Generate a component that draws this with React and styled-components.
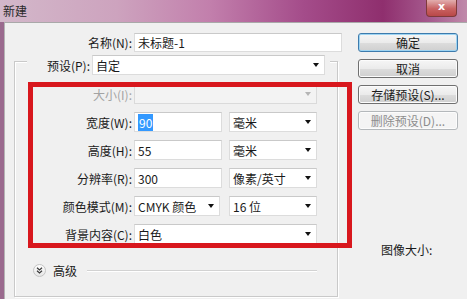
import React from "react";
import styled, { createGlobalStyle } from "styled-components";

const GlobalStyle = createGlobalStyle`
  html, body {
    margin: 0;
    padding: 0;
    background: #f0f0f0;
  }
  body {
    font-family: "Noto Sans CJK SC", "Liberation Sans", sans-serif;
    font-size: 12px;
    color: #1a1a1a;
  }
`;

const Window = styled.div`
  position: relative;
  width: 467px;
  height: 299px;
  overflow: hidden;
  display: flex;
  flex-direction: column;
  background: #f0f0f0;
`;

const TitleBar = styled.div`
  height: 22px;
  flex-shrink: 0;
  display: flex;
  justify-content: space-between;
  align-items: flex-start;
  padding-left: 3px;
  background: linear-gradient(
    to right,
    #d3b8ca 0%,
    #cda3be 25%,
    #c27fac 45%,
    #a44c8a 65%,
    #8f2f6e 82%,
    #a65a8e 92%,
    #c08aaa 100%
  );
`;

const Title = styled.span`
  font-size: 12px;
  line-height: 22px;
  color: #2a2a2a;
`;

const CloseButton = styled.div`
  width: 29px;
  height: 16px;
  margin-right: 10px;
  border: 1px solid #7e3a3a;
  border-top: none;
  border-radius: 0 0 4px 4px;
  background: linear-gradient(#e2aeae, #c96262 55%, #b94848);
  color: #fff;
  font-size: 11px;
  font-weight: bold;
  line-height: 13px;
  text-align: center;
  font-family: "DejaVu Sans", sans-serif;
`;

const Frame = styled.div`
  flex: 1;
  display: flex;
  border-left: 4px solid #9a6a8e;
`;

const Body = styled.div`
  flex: 1;
  display: flex;
  padding-top: 10px;
  background: #f0f0f0;
  border-left: 1px solid #b4b4b4;
  border-top: 1px solid #a9a9a9;
`;

const LeftColumn = styled.div`
  width: 345px;
  display: flex;
  flex-direction: column;
`;

const NameRow = styled.div`
  display: flex;
  align-items: center;
  height: 19px;
`;

const Label = styled.span`
  width: ${(p) => p.$w}px;
  margin-right: 2px;
  text-align: right;
  white-space: nowrap;
  color: ${(p) => (p.$disabled ? "#a3a3a3" : "#1a1a1a")};
`;

const Field = styled.div`
  box-sizing: border-box;
  width: ${(p) => p.$w}px;
  height: ${(p) => p.$h || 20}px;
  margin-right: ${(p) => p.$gap || 0}px;
  display: flex;
  align-items: center;
  justify-content: space-between;
  padding: 0 5px 0 3px;
  background: ${(p) => (p.$disabled ? "#f3f3f3" : "#fff")};
  border: 1px solid ${(p) => (p.$disabled ? "#dadada" : "#dcdcdc")};
  border-top-color: ${(p) => (p.$disabled ? "#d0d0d0" : "#c9c9c9")};
  white-space: nowrap;
`;

const Selected = styled.span`
  background: #3399ff;
  color: #fff;
  padding: 0 1px;
  line-height: 15px;
`;

const Arrow = styled.span`
  width: 0;
  height: 0;
  border-left: 3.5px solid transparent;
  border-right: 3.5px solid transparent;
  border-top: 4px solid ${(p) => (p.$disabled ? "#b5b5b5" : "#111")};
`;

const GroupBox = styled.div`
  box-sizing: border-box;
  width: 324px;
  height: 236px;
  margin: 9px 0 0 9px;
  border: 1px solid #c9c9c9;
  box-shadow: inset 1px 1px 0 #fff, 1px 1px 0 #fff;
  display: flex;
  flex-direction: column;
`;

const GroupHeader = styled.div`
  display: flex;
  align-items: center;
  margin-top: -7px;
  padding-left: 12px;
`;

const Legend = styled.span`
  display: flex;
  align-items: center;
  background: #f0f0f0;
  padding: 0 5px 0 17px;
  white-space: nowrap;
`;

const Rows = styled.div`
  display: flex;
  flex-direction: column;
  gap: 8px;
  margin-top: 9px;
`;

const Row = styled.div`
  display: flex;
  align-items: center;
`;

const AdvancedRow = styled.div`
  display: flex;
  align-items: center;
  gap: 7px;
  margin-top: 18px;
  padding-left: 18px;
`;

const RoundButton = styled.span`
  box-sizing: border-box;
  width: 13px;
  height: 13px;
  border-radius: 50%;
  border: 1px solid #c4c4c4;
  background: linear-gradient(#fdfdfd, #e6e6e6);
  display: flex;
  align-items: center;
  justify-content: center;
`;

const Divider = styled.span`
  width: 230px;
  height: 1px;
  margin-left: 3px;
  background: #d2d2d2;
  box-shadow: 0 1px 0 #fff;
`;

const RightColumn = styled.div`
  display: flex;
  flex-direction: column;
  gap: 7px;
  margin-left: 8px;
`;

const Button = styled.div`
  box-sizing: border-box;
  width: 100px;
  height: 19px;
  border-radius: 3px;
  border: 1px solid
    ${(p) => (p.$primary ? "#3d7bad" : p.$disabled ? "#b4b8bb" : "#707070")};
  background: ${(p) =>
    p.$disabled
      ? "#f4f4f4"
      : "linear-gradient(#f6f6f6 0%, #ebebeb 50%, #dddddd 51%, #cfcfcf 100%)"};
  box-shadow: ${(p) => (p.$primary ? "inset 0 0 0 1px #9ed4f2" : "inset 0 0 0 1px #fcfcfc")};
  color: ${(p) => (p.$disabled ? "#8d8d8d" : "#1a1a1a")};
  text-align: center;
  line-height: 17px;
  white-space: nowrap;
`;

const ImageSize = styled.span`
  margin: 106px 0 0 23px;
  line-height: 14px;
`;

const RedFrame = styled.div`
  position: absolute;
  left: 28px;
  top: 82px;
  width: 324px;
  height: 166px;
  box-sizing: border-box;
  border: 5px solid #d8171d;
  pointer-events: none;
`;

const ChevronDown = () => (
  <svg width="7" height="7" viewBox="0 0 7 7">
    <path d="M1 0.8 L3.5 3 L6 0.8 M1 3.8 L3.5 6 L6 3.8" fill="none" stroke="#3a3a3a" strokeWidth="1.2" />
  </svg>
);

const Select = ({ w, gap, disabled, children }) => (
  <Field $w={w} $gap={gap} $disabled={disabled}>
    <span>{children}</span>
    <Arrow $disabled={disabled} />
  </Field>
);

const rows = [
  { label: "大小(I):", disabled: true, fields: [{ select: true, w: 183, text: "" }] },
  {
    label: "宽度(W):",
    fields: [
      { w: 88, text: <Selected>90</Selected>, gap: 7 },
      { select: true, w: 88, text: "毫米" },
    ],
  },
  {
    label: "高度(H):",
    fields: [
      { w: 88, text: "55", gap: 7 },
      { select: true, w: 88, text: "毫米" },
    ],
  },
  {
    label: "分辨率(R):",
    fields: [
      { w: 88, text: "300", gap: 7 },
      { select: true, w: 88, text: "像素/英寸" },
    ],
  },
  {
    label: "颜色模式(M):",
    fields: [
      { select: true, w: 86, text: "CMYK 颜色", gap: 9 },
      { select: true, w: 88, text: "16 位" },
    ],
  },
  { label: "背景内容(C):", fields: [{ select: true, w: 183, text: "白色" }] },
];

export default function App() {
  return (
    <>
      <GlobalStyle />
      <Window>
        <TitleBar>
          <Title>新建</Title>
          <CloseButton>x</CloseButton>
        </TitleBar>
        <Frame>
          <Body>
            <LeftColumn>
              <NameRow>
                <Label $w={127}>名称(N):</Label>
                <Field $w={208} $h={19}>
                  <span>未标题-1</span>
                </Field>
              </NameRow>
              <GroupBox>
                <GroupHeader>
                  <Legend>
                    <Label $w={46}>预设(P):</Label>
                    <Select w={233}>自定</Select>
                  </Legend>
                </GroupHeader>
                <Rows>
                  {rows.map((r) => (
                    <Row key={r.label}>
                      <Label $w={117} $disabled={r.disabled}>
                        {r.label}
                      </Label>
                      {r.fields.map((f, i) =>
                        f.select ? (
                          <Select key={i} w={f.w} gap={f.gap} disabled={r.disabled}>
                            {f.text}
                          </Select>
                        ) : (
                          <Field key={i} $w={f.w} $gap={f.gap}>
                            <span>{f.text}</span>
                          </Field>
                        )
                      )}
                    </Row>
                  ))}
                </Rows>
                <AdvancedRow>
                  <RoundButton>
                    <ChevronDown />
                  </RoundButton>
                  <span>高级</span>
                  <Divider />
                </AdvancedRow>
              </GroupBox>
            </LeftColumn>
            <RightColumn>
              <Button $primary>确定</Button>
              <Button>取消</Button>
              <Button>存储预设(S)...</Button>
              <Button $disabled>删除预设(D)...</Button>
              <ImageSize>图像大小:</ImageSize>
            </RightColumn>
          </Body>
        </Frame>
        <RedFrame />
      </Window>
    </>
  );
}
